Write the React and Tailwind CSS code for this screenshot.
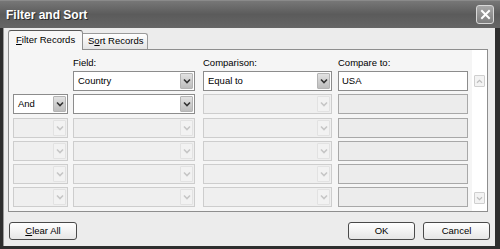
import React from 'react';

const font = { fontFamily: '"Liberation Sans", Arial, sans-serif' };

const Chevron = ({ color }) => (
  <svg width="8" height="6" viewBox="0 0 8 6">
    <polyline points="1,1.5 4,4.5 7,1.5" fill="none" stroke={color} strokeWidth="1.6" />
  </svg>
);

const Select = ({ value, enabled, className }) => (
  <div
    className={
      'h-[20px] flex items-stretch border ' +
      (enabled ? 'border-[#8c8c8c] bg-white ' : 'border-[#cdcdcd] bg-[#efefef] ') +
      className
    }
  >
    <div className="flex-1 flex items-center pl-[4px] text-[9.5px] text-black">{value}</div>
    {enabled ? (
      <div className="w-[13px] my-[1px] mr-[1px] flex items-center justify-center rounded-[1px] border border-[#b4b4b4] bg-gradient-to-b from-[#e2e2e2] to-[#bdbdbd]">
        <Chevron color="#333" />
      </div>
    ) : (
      <div className="w-[13px] my-[1px] mr-[1px] flex items-center justify-center rounded-[1px] border border-[#e2e2e2] bg-[#f2f2f2]">
        <Chevron color="#c6c6c6" />
      </div>
    )}
  </div>
);

const TextBox = ({ value, enabled, className }) => (
  <div
    className={
      'h-[20px] flex items-center pl-[3px] text-[9.5px] text-black border ' +
      (enabled ? 'border-[#8c8c8c] bg-white ' : 'border-[#a8a8a8] bg-[#ececec] ') +
      className
    }
  >
    {value}
  </div>
);

const ScrollArrow = ({ up }) => (
  <div className="w-[11px] h-[12px] mx-auto flex items-center justify-center border border-[#cfcfcf] bg-[#f3f3f3] rounded-[1px]">
    <svg width="7" height="5" viewBox="0 0 8 6">
      <polyline
        points={up ? '1,4.5 4,1.5 7,4.5' : '1,1.5 4,4.5 7,1.5'}
        fill="none"
        stroke="#bdbdbd"
        strokeWidth="1.4"
      />
    </svg>
  </div>
);

const Button = ({ children, className }) => (
  <button
    className={
      'h-[18px] w-[67px] rounded-[3px] border border-[#4a4a4a] bg-gradient-to-b from-white to-[#e6e6e6] text-[9.5px] text-black flex items-center justify-center ' +
      className
    }
  >
    {children}
  </button>
);

const rows = [
  { and: null, field: 'Country', cmp: 'Equal to', to: 'USA', enabled: true, first: true },
  { and: 'And', field: '', enabled: true },
  { enabled: false },
  { enabled: false },
  { enabled: false },
  { enabled: false },
];

export default function App() {
  return (
    <div className="w-[500px] h-[249px] flex flex-col bg-[#2e2e2e] overflow-hidden" style={font}>
      {/* title bar */}
      <div className="h-[28px] flex items-center justify-between pl-[6px] pr-[6px] bg-gradient-to-b from-[#777] via-[#5b5b5b] to-[#666] border-t border-[#8a8a8a]">
        <span className="text-white font-bold text-[12px] [text-shadow:1px_1px_0_#2a2a2a]">Filter and Sort</span>
        <div className="w-[18px] h-[19px] rounded-[3px] border border-[#d8d8d8] bg-gradient-to-b from-[#a8a8a8] to-[#7e7e7e] flex items-center justify-center">
          <svg width="11" height="11" viewBox="0 0 11 11">
            <path d="M2 2 L9 9 M9 2 L2 9" stroke="#fff" strokeWidth="2" strokeLinecap="square" />
          </svg>
        </div>
      </div>

      {/* body */}
      <div className="flex-1 ml-[3px] mr-[5px] mb-[3px] bg-[#ececec] border-l border-[#9a9a9a] flex flex-col pl-[4px] pr-[7px] pt-[2px]">
        {/* tabs */}
        <div className="h-[19px] flex items-end relative z-10">
          <div className="h-[20px] w-[75px] -mb-[1px] bg-[#f7f7f7] border border-b-0 border-[#8e8e8e] border-t-[#555] rounded-t-[3px] flex items-center pl-[7px] text-[9.5px] text-black">
            <span><u>F</u>ilter Records</span>
          </div>
          <div className="h-[16px] w-[65px] bg-gradient-to-b from-white to-[#e4e4e4] border border-l-0 border-b-0 border-[#9a9a9a] rounded-tr-[3px] flex items-center pl-[5px] text-[9.5px] text-black">
            <span>S<u>o</u>rt Records</span>
          </div>
        </div>

        {/* panel */}
        <div className="h-[163px] border border-[#8e8e8e] bg-[#f5f5f5] flex">
          <div className="flex-1 pl-[4px] pt-[6px]">
            <div className="h-[14px] flex text-[9.5px] text-black">
              <div className="w-[55px]" />
              <div className="ml-[5px] w-[122px]">Field:</div>
              <div className="ml-[8px] w-[129px]">Comparison:</div>
              <div className="ml-[6px] w-[130px]">Compare to:</div>
            </div>
            <div className="mt-[1px] flex flex-col gap-[3.3px]">
              {rows.map((r, i) => (
                <div key={i} className="flex">
                  {r.first ? (
                    <div className="w-[55px]" />
                  ) : (
                    <Select className="w-[55px]" value={r.and || ''} enabled={r.enabled} />
                  )}
                  <Select className="ml-[5px] w-[122px]" value={r.field || ''} enabled={r.enabled} />
                  <Select className="ml-[8px] w-[129px]" value={r.cmp || ''} enabled={!!r.first} />
                  <TextBox className="ml-[6px] w-[130px]" value={r.to || ''} enabled={!!r.first} />
                </div>
              ))}
            </div>
          </div>
          <div className="w-[15px] bg-white flex flex-col justify-between pt-[25px] pb-[7px]">
            <ScrollArrow up />
            <ScrollArrow />
          </div>
        </div>

        {/* buttons */}
        <div className="mt-[10px] flex items-center">
          <Button className="w-[68px] ml-[1px]">
            <span><u>C</u>lear All</span>
          </Button>
          <div className="flex-1" />
          <Button className="mr-[8px]">OK</Button>
          <Button className="-mr-[2px]">Cancel</Button>
        </div>
      </div>
    </div>
  );
}
